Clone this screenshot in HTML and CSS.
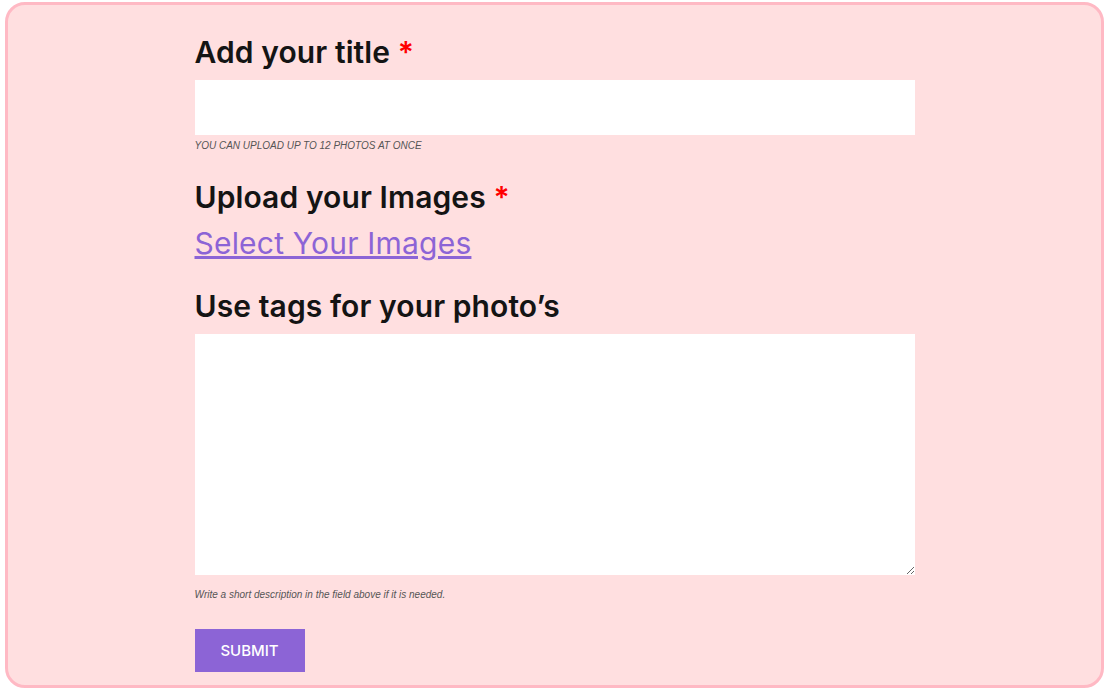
FILE: index.html
```html
<!DOCTYPE html>
<html lang="en">
<head>
    <meta charset="UTF-8">
    <meta name="viewport" content="width=device-width, initial-scale=1.0">
    <title>Upload photos</title>
    <link rel="stylesheet" href="styles.css">
</head>
<body>
    <div class="upload-box">
        <form class="upload-form">
            <label class="field-title" for="title">Add your title <span class="required">*</span></label>
            <input type="text" id="title" class="title-input">
            <p class="hint upper">You can upload up to 12 photos at once</p>

            <label class="field-title">Upload your Images <span class="required">*</span></label>
            <a href="#" class="select-link">Select Your Images</a>

            <label class="field-title" for="tags">Use tags for your photo’s</label>
            <textarea id="tags" class="tags-input"></textarea>
            <p class="hint">Write a short description in the field above if it is needed.</p>

            <button type="submit" class="submit-btn">SUBMIT</button>
        </form>
    </div>
</body>
</html>
```

FILE: styles.css
```css
/* reset */
body, h1, h2, p {
    margin: 0;
    padding: 0;
}

body {
    font-family: Inter, "Noto Sans", sans-serif;
    color: #141414;
}

.upload-box {
    margin: 2px 6px 7px 5px;
    height: 686px;
    box-sizing: border-box;
    background-color: #ffdfe0;
    border: 3px solid #ffb9c4;
    border-radius: 20px;
}

.upload-form {
    width: 720px;
    margin: 0 auto;
    padding-top: 29px;
    display: flex;
    flex-direction: column;
    align-items: flex-start;
}

.field-title {
    font-size: 30px;
    font-weight: 600;
    letter-spacing: 0.1px;
    line-height: 36px;
}

.required {
    color: #ff0000;
}

.title-input {
    width: 100%;
    height: 55px;
    margin-top: 10px;
    border: none;
    background: white;
    box-sizing: border-box;
}

.tags-input {
    width: 100%;
    height: 241px;
    margin-top: 10px;
    border: none;
    background: white;
    box-sizing: border-box;
    resize: vertical;
}

.hint {
    font-family: "Liberation Sans", Arial, sans-serif;
    font-style: italic;
    font-size: 10px;
    color: #555;
    margin-top: 5px;
}

.hint.upper {
    text-transform: uppercase;
    margin-bottom: 28px;
}

.select-link {
    font-size: 30px;
    letter-spacing: 0.2px;
    color: #8c64d6;
    line-height: 36px;
    margin-top: 10px;
    margin-bottom: 27px;
}

.tags-input + .hint {
    margin-top: 14px;
}

.submit-btn {
    margin-top: 29px;
    width: 110px;
    height: 43px;
    background-color: #8c64d6;
    color: white;
    border: none;
    font-family: Inter, sans-serif;
    font-size: 15px;
    font-weight: 500;
    cursor: pointer;
}
```
